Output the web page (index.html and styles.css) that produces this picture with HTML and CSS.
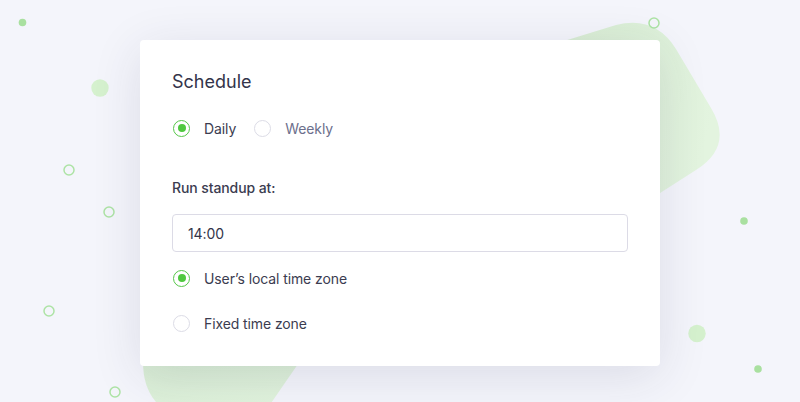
FILE: index.html
```html
<!DOCTYPE html>
<html>
<head>
<meta charset="utf-8">
<link rel="stylesheet" href="styles.css">
</head>
<body>
<div class="scene">
  <svg class="decor" width="800" height="402" viewBox="0 0 800 402">
    <defs>
      <linearGradient id="g1" x1="0" y1="0" x2="1" y2="0.3">
        <stop offset="0" stop-color="#d2e9cd"/>
        <stop offset="1" stop-color="#e3f4df"/>
      </linearGradient>
      <linearGradient id="g2" x1="0" y1="0" x2="0.3" y2="1">
        <stop offset="0" stop-color="#d3e9cf"/>
        <stop offset="1" stop-color="#e2f4de"/>
      </linearGradient>
    </defs>
    <path d="M616 25 Q655 15 676 49 L711 108 Q734 146 696 170 L540 270 L470 70 Z" fill="url(#g1)"/>
    <path d="M143 330 L143 362 Q143 412 195 422 L258 422 L318 335 Z" fill="url(#g2)"/>
    <circle cx="22.5" cy="22.5" r="3.8" fill="#a9e0a0"/>
    <circle cx="100" cy="88" r="8.7" fill="#d5f1ce"/>
    <circle cx="69" cy="170" r="5" fill="none" stroke="#ade3a5" stroke-width="1.5"/>
    <circle cx="109" cy="212" r="5" fill="none" stroke="#ade3a5" stroke-width="1.5"/>
    <circle cx="49" cy="311" r="5" fill="none" stroke="#ade3a5" stroke-width="1.5"/>
    <circle cx="115" cy="392" r="5" fill="none" stroke="#ade3a5" stroke-width="1.5"/>
    <circle cx="654" cy="23" r="5" fill="none" stroke="#ade3a5" stroke-width="1.5"/>
    <circle cx="744" cy="221" r="3.8" fill="#a9e0a0"/>
    <circle cx="697" cy="333.5" r="8.7" fill="#d5f1ce"/>
    <circle cx="758" cy="369" r="3.8" fill="#a9e0a0"/>
  </svg>

  <div class="card">
    <h1 class="title">Schedule</h1>
    <div class="radio-group">
      <label class="radio checked"><span class="dot"></span><span class="label">Daily</span></label>
      <label class="radio muted"><span class="dot"></span><span class="label">Weekly</span></label>
    </div>
    <div class="field-label">Run standup at:</div>
    <div class="input">14:00</div>
    <div class="radio-list">
      <label class="radio checked"><span class="dot"></span><span class="label">User’s local time zone</span></label>
      <label class="radio"><span class="dot"></span><span class="label">Fixed time zone</span></label>
    </div>
  </div>
</div>
</body>
</html>
```

FILE: styles.css
```css
* { box-sizing: border-box; }
html, body {
  margin: 0;
  padding: 0;
  width: 800px;
  height: 402px;
  overflow: hidden;
  background: #f4f5fb;
  font-family: Inter, "Noto Sans", sans-serif;
}
.scene {
  position: relative;
  width: 800px;
  height: 402px;
  display: flex;
  justify-content: center;
  padding-top: 40px;
}
.decor {
  position: absolute;
  left: 0;
  top: 0;
}
.card {
  position: relative;
  width: 520px;
  height: 326px;
  background: #ffffff;
  border-radius: 4px;
  box-shadow: 0 10px 50px rgba(40, 40, 80, 0.12);
  padding: 30px 32px 0 32px;
  display: flex;
  flex-direction: column;
  letter-spacing: -0.1px;
}
.title {
  margin: 0;
  font-size: 18px;
  line-height: 24px;
  font-weight: 400;
  color: #33344a;
  letter-spacing: 0;
}
.radio-group {
  margin-top: 24px;
  display: flex;
  gap: 17px;
}
.radio {
  display: flex;
  align-items: center;
  height: 20px;
  font-size: 14px;
  color: #3b3c50;
}
.radio .dot {
  width: 17px;
  height: 17px;
  border-radius: 50%;
  border: 1.5px solid #dcdce6;
  margin-left: 1px;
  margin-right: 14px;
  display: flex;
  align-items: center;
  justify-content: center;
  flex: none;
}
.radio.checked .dot {
  border-color: #55c748;
}
.radio.checked .dot::after {
  content: "";
  width: 8px;
  height: 8px;
  border-radius: 50%;
  background: #4fc83f;
}
.radio.muted { color: #6c6f8c; }
.field-label {
  margin-top: 40px;
  font-size: 14px;
  line-height: 20px;
  font-weight: 500;
  color: #3b3c50;
}
.input {
  margin-top: 16px;
  height: 38px;
  border: 1px solid #dcdbe6;
  border-radius: 4px;
  padding-left: 15px;
  display: flex;
  align-items: center;
  font-size: 14px;
  color: #33344a;
}
.radio-list {
  margin-top: 16px;
  display: flex;
  flex-direction: column;
  gap: 25px;
}
```
